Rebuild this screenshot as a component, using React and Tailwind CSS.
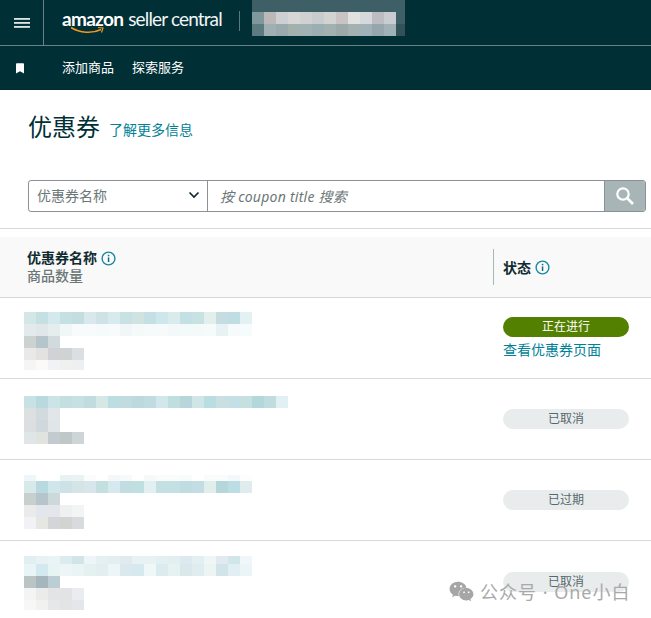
import React from "react";
import { FaWeixin } from "react-icons/fa";

const FONT = { fontFamily: '"Noto Sans","Noto Sans CJK SC",sans-serif' };

function Mosaic({ rows, cell = 12, className = "" }) {
  return (
    <div className={`flex flex-col ${className}`}>
      {rows.map((r, i) => (
        <div key={i} className="flex" style={{ height: r.h }}>
          {r.c.map((c, j) => (
            <div key={j} className="shrink-0" style={{ width: cell, background: c }} />
          ))}
        </div>
      ))}
    </div>
  );
}

const Info = ({ className = "" }) => (
  <svg width="15" height="15" viewBox="0 0 15 15" className={className}>
    <circle cx="7.5" cy="7.5" r="6.4" fill="none" stroke="#16899f" strokeWidth="1.4" />
    <rect x="6.8" y="6.4" width="1.5" height="4.6" fill="#0f6f85" />
    <rect x="6.8" y="3.8" width="1.5" height="1.5" fill="#0f6f85" />
  </svg>
);

const Pill = ({ children, green }) => (
  <div
    className={`w-[126px] h-5 rounded-full flex items-center justify-center text-[12px] leading-none ${
      green ? "bg-[#538000] text-white" : "bg-[#e9ecec] text-[#56686c]"
    }`}
  >
    {children}
  </div>
);

const headerMosaic = [
  { h: 12, c: ["#3f5f66","#3f5f66","#3f5f66","#3f5f66","#3f5f66","#3f5f66","#3f5f66","#3f5f66","#3f5f66","#3f5f66","#3f5f66","#3f5f66","#3f5f66"] },
  { h: 12, c: ["#7f989c","#bcb8b7","#ccd0d2","#d5d6d5","#d0d2d2","#c9ccce","#d3d4d1","#c9c4c3","#e0e2e0","#d5d9da","#bcbcc2","#c9cdd1","#3f5f66"] },
  { h: 12, c: ["#5c7b80","#a0b0b2","#9aa9ab","#a3b0ae","#a1b2b5","#9bafb3","#a2b0b0","#9baaa9","#a5b1b1","#a0b2b8","#95a6ac","#a0b2b6","#335257"] },
];

const mosaics = [
  {
    rows: [
      { h: 12, c: ["#d3e7e7","#c4e0e2","#d3e9ec","#c4e0e3","#c4dee0","#d8e8ed","#cfe3e6","#d7ebee","#c8e2e4","#d1e3e1","#c4e0e5","#cde7eb","#d9ebea","#c3e0e4","#c8e1e3","#e3efec","#c5dce1","#bfdde3","#e4f1f3"] },
      { h: 12, c: ["#e3eaeb","#dfe7e9","#e6eded","#f1f7f7","#f7fbfb","#f7fbfb","#f5fafa","#f7fbfb","#f1f7f9","#f4fafa","#f5fafa","#f6fafa","#f3f9f9","#f4fafa","#f4f9f9","#f5fafa","#e8f2f5","#f6fafb","#f6fbfb"] },
      { h: 12, c: ["#cbd2d0","#b6c5cc","#d1dadd"] },
      { h: 12, c: ["#e9e9e9","#e3e2e0","#d0d2d6","#d0d3d4","#dcdfe1"] },
      { h: 10, c: ["#f5f5f5","#fafaf9","#f1f2f5","#eff0f0","#eeeff1"] },
    ],
    pt: "pt-[14px]",
  },
  {
    rows: [
      { h: 12, c: ["#c8e1e4","#b9d9df","#cbe4e8","#c3dfdf","#c6e0e3","#c1dcdf","#d5e8e6","#bcdde1","#c1dcde","#bcdade","#bfdce0","#d1e7ec","#bfdede","#b9d5dc","#cfe5e8","#b9dde0","#c9dfe2","#c3e0e7","#c6e0e2","#b4d7dc","#c0dcde","#e1f1f3"] },
      { h: 12, c: ["#dde0e1","#d3dadd","#e0e6e9"] },
      { h: 12, c: ["#dcdfdf","#cfd8dc","#e0e5e7"] },
      { h: 12, c: ["#e0e5e7","#e1e3df","#c4cbd0","#c0c8c7","#cfd5d7"] },
    ],
    pt: "pt-[17px]",
  },
  {
    rows: [
      { h: 6, c: ["#eef6f9","#ffffff","#ffffff","#e8f2f2","#e9f3f3","#fbfcfc","#ffffff","#f3f7f7","#f7fafa","#ffffff","#f6f9f8","#fafcfc","#fafcfc","#f8fbfc","#ffffff","#fafcfc","#fafcfc","#f4f8fb","#fdfdfd"] },
      { h: 12, c: ["#d7e9e9","#b9d9e0","#cfe7ea","#cde2e6","#d3e5e4","#d6e6ea","#c3dfe0","#d5e9ee","#c2dde1","#c0dfe0","#e3f0f1","#c4e0e1","#c3e0e2","#bfdde0","#c3dee2","#e0eeec","#b5d7da","#bcdde3","#deecee"] },
      { h: 12, c: ["#c8d0ce","#b8c4cc","#cdd8da"] },
      { h: 12, c: ["#ebebeb","#e3e6ea","#e3e6ea","#eff0f2","#f3f5f4"] },
      { h: 12, c: ["#f0f2f5","#e6e7e3","#d3d5d9","#d1d4d1","#d8dbde"] },
    ],
    pt: "pt-[15px]",
  },
  {
    rows: [
      { h: 8, c: ["#e0eff2","#e8f1f4","#e8f4f6","#dcebed","#d1e4e7","#eef5f9","#e5f0f2","#e2eef0","#e1ebee","#e6f2f3","#eaf1f3","#e4eff1","#e3efef","#dde9f0","#e3f0f3","#f0f5f5","#e1ebef","#d0e6eb","#f0f6f9"] },
      { h: 12, c: ["#e9f5f5","#d3e8ef","#e7f4f4","#edf5f7","#ebf4f5","#e5f0f1","#e3eef1","#ecf5f8","#d9e9ee","#d5e9ee","#f0f7f7","#dcebed","#e5f1f3","#dbe8eb","#dfedf1","#edf4f4","#d1e4e9","#e1eff5","#ebf4f6"] },
      { h: 12, c: ["#bac4c2","#a5b6bd","#bccdd4"] },
      { h: 12, c: ["#f3f4f4","#ebebea","#e4e4e7","#e2e3e5","#ebecef"] },
      { h: 10, c: ["#f6f7f6","#f1f1f1","#e6e7e9","#e3e4e4","#e3e6ea"] },
    ],
    pt: "pt-[15px]",
  },
];

const statuses = ["", "已取消", "已过期", "已取消"];

export default function App() {
  return (
    <div className="relative w-[651px] h-[618px] overflow-hidden bg-white text-[#0f1111]" style={FONT}>
      {/* top bar */}
      <div className="h-[46px] bg-[#002f36] border-b border-[#6b8285] flex">
        <div className="w-[44px] border-r border-[#6b8285] flex items-center justify-center">
          <svg width="16" height="10" viewBox="0 0 16 10" fill="#dfe6e6">
            <rect y="0" width="16" height="1.8" />
            <rect y="4" width="16" height="1.8" />
            <rect y="8" width="16" height="1.8" />
          </svg>
        </div>
        <div className="relative w-[195px] pl-[18px] pt-[9px] text-white leading-none">
          <div className="flex items-baseline text-[19px] whitespace-nowrap" style={{ fontFamily: '"Lato",sans-serif' }}>
            <span className="font-bold tracking-[-0.7px]">amazon</span>
            <span className="ml-[5px] font-normal tracking-[-0.85px] text-[#f2f5f5]">seller central</span>
          </div>
          <svg className="absolute left-[26px] top-[26px]" width="36" height="9" viewBox="0 0 36 9" fill="none">
            <path d="M1 1.5C10 7 22 8 31 3.5" stroke="#f0981f" strokeWidth="1.5" />
            <path d="M28 1.5L33 2L31.5 6.5" stroke="#f0981f" strokeWidth="1.2" />
          </svg>
        </div>
        <div className="w-px h-[20px] mt-[11px] bg-[#5d787c]" />
        <div className="ml-3 w-[153px] overflow-hidden">
          <Mosaic rows={headerMosaic} />
        </div>
      </div>

      {/* second bar */}
      <div className="h-[44px] bg-[#002f36] flex items-center text-[13px] text-white">
        <svg className="ml-[15px]" width="10" height="11" viewBox="0 0 9 11" fill="#ffffff">
          <path d="M0.5 1.2C0.5 .6 1 .2 1.5 .2H7.5C8 .2 8.5 .6 8.5 1.2V10.6L4.5 8.2L0.5 10.6Z" />
        </svg>
        <span className="ml-[37px]">添加商品</span>
        <span className="ml-[18px]">探索服务</span>
      </div>

      {/* title */}
      <div className="h-[90px] pl-[28px] pt-[19px] flex items-start">
        <h1 className="text-[24px] leading-[36px] text-[#002f36]">优惠券</h1>
        <a className="ml-[9px] mt-[11px] text-[14px] leading-[20px] text-[#008296]">了解更多信息</a>
      </div>

      {/* search */}
      <div className="ml-[28px] mr-[5px] h-[32px] flex border border-[#8d9096] rounded-[3px] overflow-hidden">
        <div className="w-[179px] border-r border-[#8d9096] flex items-center justify-between pl-2 pr-[7px] text-[14px] text-[#6c7778]">
          <span className="mb-[1px]">优惠券名称</span>
          <svg width="12" height="8" viewBox="0 0 12 8" fill="none" className="mb-[3px]">
            <path d="M1.5 1.5L6 6L10.5 1.5" stroke="#0f2b30" strokeWidth="1.7" />
          </svg>
        </div>
        <div className="flex-1 flex items-center pl-3 text-[14px] italic tracking-[0.25px] text-[#6c7778]">按 coupon title 搜索</div>
        <div className="w-[41px] bg-[#a7b5b6] border-l border-[#8d9096] flex items-center justify-center">
          <svg width="20" height="20" viewBox="0 0 20 20" fill="none" className="mr-[1px]">
            <circle cx="8" cy="8" r="5.7" stroke="#ffffff" strokeWidth="2.2" />
            <path d="M12.5 12.5L18 18" stroke="#ffffff" strokeWidth="2.6" />
          </svg>
        </div>
      </div>

      {/* table */}
      <div className="mt-4 border-t border-[#d5d9d9]">
        <div className="mt-2 h-[61px] bg-[#f9f9f9] border-b border-[#d5d9d9] flex items-center">
          <div className="w-[493px] pl-[27px] text-[14px] leading-[18px]">
            <div className="flex items-center font-bold text-[#0f2b30]">
              优惠券名称
              <Info className="ml-[4px]" />
            </div>
            <div className="font-medium text-[#6c7778]">商品数量</div>
          </div>
          <div className="h-9 border-l border-[#aab7b8] pl-[9px] flex items-center text-[14px] font-bold text-[#0f2b30]">
            状态
            <Info className="ml-[4px]" />
          </div>
        </div>

        {mosaics.map((m, i) => (
          <div key={i} className={`h-[81px] flex ${i < 3 ? "border-b border-[#d5dbdb]" : ""}`}>
            <div className={`w-[503px] pl-[24px] ${m.pt}`}>
              <Mosaic rows={m.rows} />
            </div>
            <div className="w-[126px] flex flex-col justify-center">
              {i === 0 ? (
                <>
                  <div className="mt-[1px]">
                    <Pill green>正在进行</Pill>
                  </div>
                  <a className="mt-[3px] text-[14px] leading-[20px] text-[#008296] whitespace-nowrap">查看优惠券页面</a>
                </>
              ) : (
                <Pill>{statuses[i]}</Pill>
              )}
            </div>
          </div>
        ))}
      </div>

      {/* watermark */}
      <div className="absolute left-[449px] top-[579px] flex items-center text-[#a9a9a9] text-[18px] leading-[24px] whitespace-nowrap">
        <FaWeixin className="w-[25px] h-[25px] text-[#a6a6a6]" />
        <span className="ml-[6px] tracking-[1px]">公众号 · One小白</span>
      </div>
    </div>
  );
}
